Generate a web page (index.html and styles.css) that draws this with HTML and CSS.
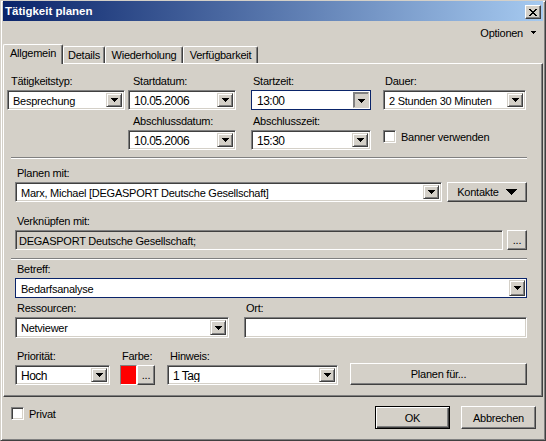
FILE: index.html
```html
<!DOCTYPE html>
<html>
<head>
<meta charset="utf-8">
<title>Tätigkeit planen</title>
<link rel="stylesheet" href="styles.css">
</head>
<body>
<div class="window">
  <div class="titlebar">
    <span class="title">Tätigkeit planen</span>
    <span class="close"><svg width="8" height="7" viewBox="0 0 8 7"><path d="M0 0h2v1h-2zM6 0h2v1h-2zM1 1h2v1h-2zM5 1h2v1h-2zM2 2h4v1h-4zM3 3h2v1h-2zM2 4h4v1h-4zM1 5h2v1h-2zM5 5h2v1h-2zM0 6h2v1h-2zM6 6h2v1h-2z"/></svg></span>
  </div>
  <div class="menubar">
    <span>Optionen</span>
    <svg class="menu-arrow" width="5" height="3" viewBox="0 0 5 3"><path d="M0 0h5v1h-5zM1 1h3v1h-3zM2 2h1v1h-1z"/></svg>
  </div>
  <div class="tabs">
    <div class="tab active tab-allg">Allgemein</div>
    <div class="tab tab-det">Details</div>
    <div class="tab tab-wdh">Wiederholung</div>
    <div class="tab tab-vfg">Verfügbarkeit</div>
  </div>
  <div class="panel">
    <div class="top-grid">
      <div class="field">
        <div class="lbl pl4">Tätigkeitstyp:</div>
        <div class="combo w-typ"><span class="val">Besprechung</span><span class="dd"><svg width="7" height="4" viewBox="0 0 7 4"><path d="M0 0h7v1h-7zM1 1h5v1h-5zM2 2h3v1h-3zM3 3h1v1h-1z"/></svg></span></div>
      </div>
      <div class="field">
        <div class="lbl pl5">Startdatum:</div>
        <div class="combo w-dat"><span class="val big">10.05.2006</span><span class="dd"><svg width="7" height="4" viewBox="0 0 7 4"><path d="M0 0h7v1h-7zM1 1h5v1h-5zM2 2h3v1h-3zM3 3h1v1h-1z"/></svg></span></div>
      </div>
      <div class="field">
        <div class="lbl pl2">Startzeit:</div>
        <div class="combo focus w-zeit"><span class="val big">13:00</span><span class="dd pressed"><svg width="7" height="4" viewBox="0 0 7 4"><path d="M0 0h7v1h-7zM1 1h5v1h-5zM2 2h3v1h-3zM3 3h1v1h-1z"/></svg></span></div>
      </div>
      <div class="field">
        <div class="lbl pl2">Dauer:</div>
        <div class="combo w-dauer"><span class="val">2 Stunden 30 Minuten</span><span class="dd"><svg width="7" height="4" viewBox="0 0 7 4"><path d="M0 0h7v1h-7zM1 1h5v1h-5zM2 2h3v1h-3zM3 3h1v1h-1z"/></svg></span></div>
      </div>
      <div class="field"></div>
      <div class="field">
        <div class="lbl pl5">Abschlussdatum:</div>
        <div class="combo w-dat"><span class="val big">10.05.2006</span><span class="dd"><svg width="7" height="4" viewBox="0 0 7 4"><path d="M0 0h7v1h-7zM1 1h5v1h-5zM2 2h3v1h-3zM3 3h1v1h-1z"/></svg></span></div>
      </div>
      <div class="field">
        <div class="lbl pl2">Abschlusszeit:</div>
        <div class="combo w-zeit"><span class="val big">15:30</span><span class="dd"><svg width="7" height="4" viewBox="0 0 7 4"><path d="M0 0h7v1h-7zM1 1h5v1h-5zM2 2h3v1h-3zM3 3h1v1h-1z"/></svg></span></div>
      </div>
      <div class="field banner">
        <div class="check-row"><span class="chk"></span><span>Banner verwenden</span></div>
      </div>
    </div>

    <div class="sep"></div>

    <div class="sec sec-planen">
      <div class="lbl pl2">Planen mit:</div>
      <div class="row">
        <div class="combo grow"><span class="val">Marx, Michael [DEGASPORT Deutsche Gesellschaft]</span><span class="dd"><svg width="7" height="4" viewBox="0 0 7 4"><path d="M0 0h7v1h-7zM1 1h5v1h-5zM2 2h3v1h-3zM3 3h1v1h-1z"/></svg></span></div>
        <div class="btn kontakte"><span>Kontakte</span><svg width="11" height="6" viewBox="0 0 11 6"><path d="M0 0h11v1h-11zM1 1h9v1h-9zM2 2h7v1h-7zM3 3h5v1h-5zM4 4h3v1h-3zM5 5h1v1h-1z"/></svg></div>
      </div>
    </div>

    <div class="sec sec-verk">
      <div class="lbl pl2">Verknüpfen mit:</div>
      <div class="row">
        <div class="readonly">DEGASPORT Deutsche Gesellschaft;</div>
        <div class="btn dots-btn">...</div>
      </div>
    </div>

    <div class="sep sep2"></div>

    <div class="sec sec-betreff">
      <div class="lbl pl2">Betreff:</div>
      <div class="combo focus"><span class="val">Bedarfsanalyse</span><span class="dd"><svg width="7" height="4" viewBox="0 0 7 4"><path d="M0 0h7v1h-7zM1 1h5v1h-5zM2 2h3v1h-3zM3 3h1v1h-1z"/></svg></span></div>
    </div>

    <div class="sec sec-res">
      <div class="field res">
        <div class="lbl pl2">Ressourcen:</div>
        <div class="combo tall"><span class="val">Netviewer</span><span class="dd"><svg width="7" height="4" viewBox="0 0 7 4"><path d="M0 0h7v1h-7zM1 1h5v1h-5zM2 2h3v1h-3zM3 3h1v1h-1z"/></svg></span></div>
      </div>
      <div class="field ort">
        <div class="lbl pl2">Ort:</div>
        <div class="textbox"></div>
      </div>
    </div>

    <div class="sec sec-prio">
      <div class="field prio">
        <div class="lbl pl2">Priorität:</div>
        <div class="combo"><span class="val big">Hoch</span><span class="dd"><svg width="7" height="4" viewBox="0 0 7 4"><path d="M0 0h7v1h-7zM1 1h5v1h-5zM2 2h3v1h-3zM3 3h1v1h-1z"/></svg></span></div>
      </div>
      <div class="field farbe">
        <div class="lbl pl2">Farbe:</div>
        <div class="colorpick"><span class="swatch"></span><span class="btn dots-small">...</span></div>
      </div>
      <div class="field hinweis">
        <div class="lbl pl3">Hinweis:</div>
        <div class="combo"><span class="val big">1 Tag</span><span class="dd"><svg width="7" height="4" viewBox="0 0 7 4"><path d="M0 0h7v1h-7zM1 1h5v1h-5zM2 2h3v1h-3zM3 3h1v1h-1z"/></svg></span></div>
      </div>
      <div class="btn planen">Planen für...</div>
    </div>
  </div>
  <div class="footer">
    <div class="check-row privat"><span class="chk"></span><span>Privat</span></div>
    <div class="buttons">
      <div class="btn fbtn default">OK</div>
      <div class="btn fbtn">Abbrechen</div>
    </div>
  </div>
</div>
</body>
</html>
```
FILE: styles.css
```css
* { box-sizing: border-box; }
html, body { margin: 0; padding: 0; }
body {
  background: #d4d0c8;
  font-family: "Liberation Sans", Arial, sans-serif;
  font-size: 11px;
  letter-spacing: -0.25px;
  color: #000;
}
svg { display: block; }

.window {
  width: 546px;
  height: 441px;
  border: 1px solid;
  border-color: #d4d0c8 #404040 #404040 #d4d0c8;
  box-shadow: inset 1px 1px #fff, inset -1px -1px #808080;
  padding: 0 2px 2px 2px;
  display: flex;
  flex-direction: column;
  background: #d4d0c8;
}

.titlebar {
  height: 20px;
  flex: none;
  background: linear-gradient(to right, #0a246a, #a6caf0);
  display: flex;
  align-items: flex-start;
  padding-left: 2px;
}
.title {
  color: #fff;
  font-weight: bold;
  font-size: 11.5px;
  letter-spacing: 0;
  line-height: 20px;
}
.close {
  margin-left: auto;
  margin-right: 2px;
  margin-top: 4px;
  width: 16px;
  height: 14px;
  background: #d4d0c8;
  border: 1px solid;
  border-color: #fff #404040 #404040 #fff;
  box-shadow: inset -1px -1px #808080;
  display: flex;
  align-items: center;
  justify-content: center;
}

.menubar {
  height: 23px;
  flex: none;
  display: flex;
  justify-content: flex-end;
  align-items: center;
  padding-right: 7px;
}
.menu-arrow { margin-left: 8px; }

.tabs {
  height: 19px;
  flex: none;
  display: flex;
  align-items: flex-end;
  position: relative;
  z-index: 1;
}
.tab {
  height: 17px;
  border: 1px solid;
  border-bottom: 0;
  border-color: #fff #404040 #404040 #fff;
  box-shadow: inset -1px 0 #808080;
  border-radius: 2px 2px 0 0;
  display: flex;
  align-items: center;
  justify-content: center;
  background: #d4d0c8;
  white-space: nowrap;
}
.tab.active {
  height: 20px;
  margin-bottom: -1px;
  padding-bottom: 3px;
}
.tab-allg { width: 60px; }
.tab-det { width: 42px; }
.tab-wdh { width: 78px; }
.tab-vfg { width: 75px; }

.panel {
  height: 334px;
  flex: none;
  border: 1px solid;
  border-color: #fff #404040 #404040 #fff;
  box-shadow: inset -1px -1px #808080;
  padding-top: 11px;
}

.lbl {
  height: 13px;
  line-height: 13px;
  white-space: nowrap;
}
.pl2 { padding-left: 2px; }
.pl3 { padding-left: 3px; }
.pl4 { padding-left: 4px; }
.pl5 { padding-left: 5px; }

.top-grid {
  display: grid;
  grid-template-columns: 121px 123px 132px 143px;
  row-gap: 5px;
  margin-left: 3px;
}
.field {
  display: flex;
  flex-direction: column;
  gap: 2px;
}
.w-typ { width: 118px; }
.w-dat { width: 108px; }
.w-zeit { width: 120px; }
.w-dauer { width: 143px; }

.combo {
  height: 20px;
  display: flex;
  background: #fff;
  border: 1px solid;
  border-color: #808080 #fff #fff #808080;
  box-shadow: inset 1px 1px #404040, inset -1px -1px #d4d0c8;
  padding: 2px;
}
.combo.tall { height: 21px; }
.combo .val {
  flex: 1;
  min-width: 0;
  padding-left: 3px;
  line-height: 16px;
  white-space: nowrap;
  overflow: hidden;
}
.combo .val.big {
  font-size: 12px;
  letter-spacing: -0.5px;
}
.combo.focus {
  border: 1px solid #0a246a;
  box-shadow: none;
  padding: 1px 1px 1px 2px;
}
.combo.focus .val { line-height: 18px; }
.dd {
  flex: none;
  width: 16px;
  background: #d4d0c8;
  border: 1px solid;
  border-color: #d4d0c8 #404040 #404040 #d4d0c8;
  box-shadow: inset 1px 1px #fff, inset -1px -1px #808080;
  display: flex;
  align-items: center;
  justify-content: center;
}
.dd.pressed {
  border-color: #808080 #d4d0c8 #d4d0c8 #808080;
  box-shadow: inset 1px 1px #808080;
  padding: 1px 0 0 1px;
}

.banner { padding-top: 15px; }
.check-row {
  display: flex;
  align-items: center;
  gap: 5px;
  white-space: nowrap;
}
.chk {
  flex: none;
  width: 13px;
  height: 13px;
  border: 1px solid;
  border-color: #808080 #fff #fff #808080;
  box-shadow: inset 1px 1px #404040, inset -1px -1px #d4d0c8;
  background: #fff;
}

.sep {
  margin: 7px 0 0 7px;
  width: 516px;
  height: 2px;
  border-top: 1px solid #808080;
  border-bottom: 1px solid #fff;
}
.sep2 { margin-top: 8px; }

.sec {
  margin-left: 11px;
  width: 512px;
  display: flex;
  flex-direction: column;
  gap: 2px;
}
.sec-planen { margin-top: 8px; }
.sec-verk { margin-top: 13px; }
.sec-betreff { margin-top: 3px; }
.sec-res {
  margin-top: 4px;
  flex-direction: row;
  gap: 15px;
}
.sec-prio {
  margin-top: 12px;
  flex-direction: row;
  align-items: flex-end;
  gap: 0;
}

.row {
  display: flex;
  align-items: flex-start;
}
.grow { flex: 1; }

.btn {
  height: 20px;
  border: 1px solid;
  border-color: #fff #404040 #404040 #fff;
  box-shadow: inset -1px -1px #808080;
  background: #d4d0c8;
  display: flex;
  align-items: center;
  justify-content: center;
  white-space: nowrap;
}
.kontakte {
  width: 80px;
  margin-left: 5px;
  gap: 7px;
}
.readonly {
  width: 488px;
  height: 20px;
  border: 1px solid;
  border-color: #808080 #fff #fff #808080;
  box-shadow: inset 1px 1px #404040, inset -1px -1px #d4d0c8;
  background: #d4d0c8;
  padding: 2px 2px 2px 3px;
  line-height: 16px;
  white-space: nowrap;
  overflow: hidden;
}
.dots-btn {
  width: 20px;
  margin-left: 4px;
  align-items: flex-end;
  padding-bottom: 3px;
}

.res { width: 214px; }
.ort { width: 283px; }
.textbox {
  height: 21px;
  border: 1px solid;
  border-color: #808080 #fff #fff #808080;
  box-shadow: inset 1px 1px #404040, inset -1px -1px #d4d0c8;
  background: #fff;
}

.prio { width: 95px; }
.farbe { width: 35px; margin-left: 10px; }
.hinweis { width: 171px; margin-left: 12px; }
.colorpick {
  display: flex;
  height: 20px;
}
.swatch {
  width: 17px;
  height: 20px;
  border: 1px solid;
  border-color: #808080 #fff #fff #808080;
  background: #ff0000;
}
.dots-small {
  width: 18px;
  align-items: flex-end;
  padding-bottom: 3px;
}
.planen {
  width: 177px;
  height: 22px;
  margin-left: 12px;
}

.footer {
  flex: 1;
  display: flex;
  align-items: flex-start;
}
.privat { margin: 10px 0 0 8px; }
.buttons {
  margin-left: auto;
  margin-top: 9px;
  margin-right: 7px;
  display: flex;
  gap: 11px;
}
.fbtn {
  width: 75px;
  height: 23px;
}
.fbtn.default {
  border: 1px solid #000;
  box-shadow: inset 1px 1px #fff, inset -1px -1px #404040, inset -2px -2px #808080;
}
```
